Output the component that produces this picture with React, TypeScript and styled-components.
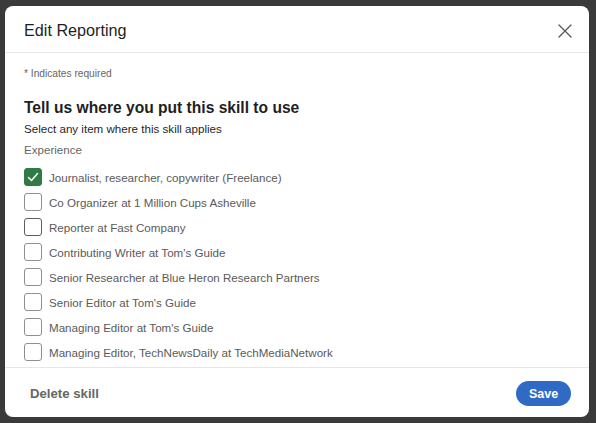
import React from "react";
import styled, { createGlobalStyle } from "styled-components";

const Global = createGlobalStyle`
  html, body { margin: 0; padding: 0; }
  body {
    background: #3a3a3a;
    font-family: "Liberation Sans", Arial, sans-serif;
    -webkit-font-smoothing: antialiased;
  }
`;

const Backdrop = styled.div`
  width: 596px;
  height: 423px;
  box-sizing: border-box;
  padding: 6px 7px 6px 5px;
  background: #3a3a3a;
  overflow: hidden;
`;

const Modal = styled.div`
  width: 584px;
  height: 411px;
  background: #fff;
  border-radius: 8px;
  display: flex;
  flex-direction: column;
  overflow: hidden;
`;

const Header = styled.div`
  height: 47px;
  box-sizing: border-box;
  display: flex;
  align-items: center;
  justify-content: space-between;
  padding: 0 13px 0 19px;
  border-bottom: 1px solid #e6e6e6;
`;

const Title = styled.h2`
  margin: 0;
  font-size: 16.2px;
  font-weight: 400;
  color: #1f1f1f;
  padding-top: 3px;
`;

const CloseButton = styled.button`
  border: none;
  background: none;
  padding: 0;
  width: 22px;
  height: 22px;
  margin-top: 3px;
  display: flex;
  align-items: center;
  justify-content: center;
  color: #555;
  cursor: pointer;
`;

const Body = styled.div`
  flex: 1;
  padding: 14px 19px 0;
  overflow: hidden;
`;

const Required = styled.div`
  font-size: 10.2px;
  color: #666;
  height: 14px;
  line-height: 14px;
`;

const Heading = styled.h3`
  margin: 17px 0 0;
  font-size: 15.6px;
  font-weight: 700;
  color: #1f1f1f;
  line-height: 20px;
`;

const Sub = styled.div`
  font-size: 11.6px;
  color: #1f1f1f;
  line-height: 14px;
  margin-top: 4px;
`;

const Section = styled.div`
  font-size: 11.6px;
  color: #666;
  line-height: 14px;
  margin-top: 7px;
`;

const List = styled.div`
  margin-top: 11px;
  display: flex;
  flex-direction: column;
  gap: 7px;
`;

const Row = styled.label`
  display: flex;
  align-items: center;
  gap: 7px;
  height: 18px;
`;

const Box = styled.span<{ $checked?: boolean; $dark?: boolean }>`
  width: 18px;
  height: 18px;
  box-sizing: border-box;
  border-radius: 3px;
  border: 1px solid ${(p) => (p.$checked ? "#2f7a46" : p.$dark ? "#5e5e5e" : "#8f8f8f")};
  background: ${(p) => (p.$checked ? "#2f7a46" : "#fff")};
  display: flex;
  align-items: center;
  justify-content: center;
  flex-shrink: 0;
`;

const Label = styled.span`
  font-size: 11.6px;
  color: #5a5a5a;
  white-space: nowrap;
`;

const Footer = styled.div`
  height: 50px;
  box-sizing: border-box;
  border-top: 1px solid #e6e6e6;
  display: flex;
  align-items: center;
  justify-content: space-between;
  padding: 2px 18px 0 25px;
`;

const Delete = styled.button`
  border: none;
  background: none;
  padding: 0;
  font-family: inherit;
  font-size: 13.2px;
  font-weight: 700;
  color: #666;
`;

const Save = styled.button`
  border: none;
  background: #2f6bc4;
  color: #fff;
  font-family: inherit;
  font-size: 12.5px;
  font-weight: 700;
  width: 55px;
  height: 25px;
  border-radius: 13px;
  padding: 0;
`;

const items = [
  "Journalist, researcher, copywriter (Freelance)",
  "Co Organizer at 1 Million Cups Asheville",
  "Reporter at Fast Company",
  "Contributing Writer at Tom's Guide",
  "Senior Researcher at Blue Heron Research Partners",
  "Senior Editor at Tom's Guide",
  "Managing Editor at Tom's Guide",
  "Managing Editor, TechNewsDaily at TechMediaNetwork",
];

export default function App() {
  return (
    <Backdrop>
      <Global />
      <Modal>
        <Header>
          <Title>Edit Reporting</Title>
          <CloseButton aria-label="Dismiss">
            <svg width="14" height="14" viewBox="0 0 14 14">
              <path d="M1 1L13 13M13 1L1 13" stroke="#555" strokeWidth="1.3" strokeLinecap="round" />
            </svg>
          </CloseButton>
        </Header>
        <Body>
          <Required>* Indicates required</Required>
          <Heading>Tell us where you put this skill to use</Heading>
          <Sub>Select any item where this skill applies</Sub>
          <Section>Experience</Section>
          <List>
            {items.map((t, i) => (
              <Row key={t}>
                <Box $checked={i === 0} $dark={i === 2}>
                  {i === 0 && (
                    <svg width="12" height="12" viewBox="0 0 12 12">
                      <path d="M1.5 6.5L4.5 9.5L10.5 2.5" stroke="#fff" strokeWidth="1.5" fill="none" strokeLinecap="round" strokeLinejoin="round" />
                    </svg>
                  )}
                </Box>
                <Label>{t}</Label>
              </Row>
            ))}
          </List>
        </Body>
        <Footer>
          <Delete>Delete skill</Delete>
          <Save>Save</Save>
        </Footer>
      </Modal>
    </Backdrop>
  );
}
